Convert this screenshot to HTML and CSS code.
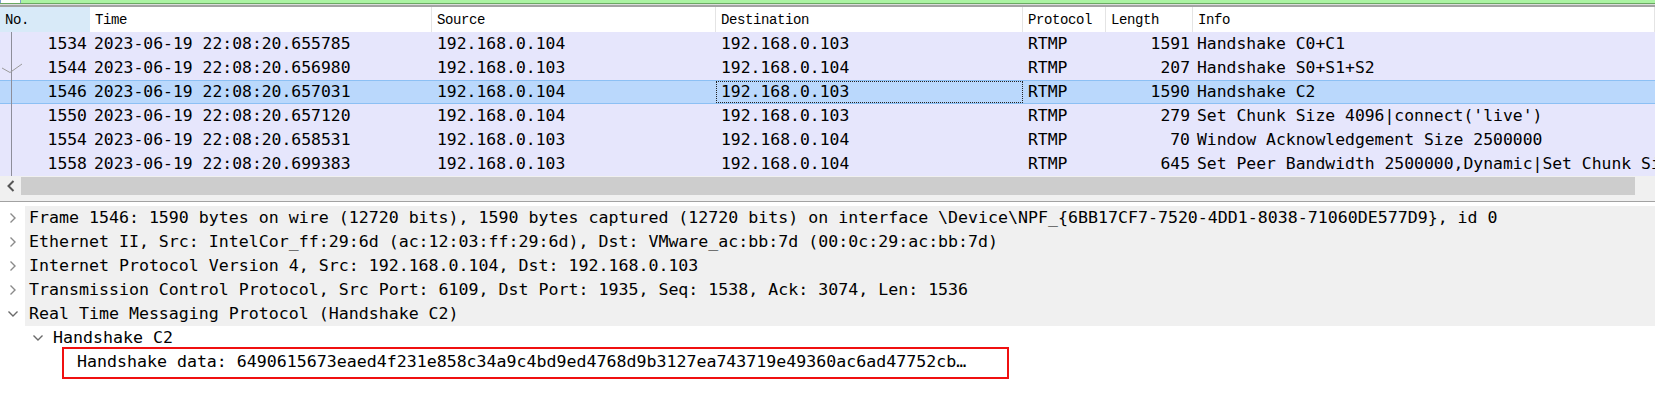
FILE: index.html
```html
<!DOCTYPE html>
<html>
<head>
<meta charset="utf-8">
<link rel="stylesheet" href="styles.css">
</head>
<body>
<div class="filter"><div class="filter-icon"></div></div>
<div class="rule"></div>
<div class="plist">
  <div class="prow phead">
    <div class="hc hc-no">No.</div>
    <div class="hc">Time</div>
    <div class="hc">Source</div>
    <div class="hc">Destination</div>
    <div class="hc">Protocol</div>
    <div class="hc">Length</div>
    <div class="hc">Info</div>
  </div>
  <div class="rows">
    <div class="gutter-line"></div>
    <svg class="tick" width="24" height="14" viewBox="0 0 24 14"><polyline points="2,7 10,11.5 22,3" fill="none" stroke="#9a9a9a" stroke-width="1"/></svg>
    <div class="prow">
      <div class="c num">1534</div><div class="c t">2023-06-19 22:08:20.655785</div><div class="c">192.168.0.104</div><div class="c">192.168.0.103</div><div class="c">RTMP</div><div class="c len">1591</div><div class="c info">Handshake C0+C1</div>
    </div>
    <div class="prow">
      <div class="c num">1544</div><div class="c t">2023-06-19 22:08:20.656980</div><div class="c">192.168.0.103</div><div class="c">192.168.0.104</div><div class="c">RTMP</div><div class="c len">207</div><div class="c info">Handshake S0+S1+S2</div>
    </div>
    <div class="prow sel">
      <div class="c num">1546</div><div class="c t">2023-06-19 22:08:20.657031</div><div class="c">192.168.0.104</div><div class="c focus">192.168.0.103</div><div class="c">RTMP</div><div class="c len">1590</div><div class="c info">Handshake C2</div>
    </div>
    <div class="prow">
      <div class="c num">1550</div><div class="c t">2023-06-19 22:08:20.657120</div><div class="c">192.168.0.104</div><div class="c">192.168.0.103</div><div class="c">RTMP</div><div class="c len">279</div><div class="c info">Set Chunk Size 4096|connect('live')</div>
    </div>
    <div class="prow">
      <div class="c num">1554</div><div class="c t">2023-06-19 22:08:20.658531</div><div class="c">192.168.0.103</div><div class="c">192.168.0.104</div><div class="c">RTMP</div><div class="c len">70</div><div class="c info">Window Acknowledgement Size 2500000</div>
    </div>
    <div class="prow">
      <div class="c num">1558</div><div class="c t">2023-06-19 22:08:20.699383</div><div class="c">192.168.0.103</div><div class="c">192.168.0.104</div><div class="c">RTMP</div><div class="c len">645</div><div class="c info">Set Peer Bandwidth 2500000,Dynamic|Set Chunk Size 4096</div>
    </div>
  </div>
  <div class="hscroll">
    <div class="arrow"><svg width="8" height="12" viewBox="0 0 8 12"><polyline points="6.5,1 1.5,6 6.5,11" fill="none" stroke="#555" stroke-width="2"/></svg></div>
    <div class="thumb"></div>
  </div>
</div>
<div class="splitter"></div>
<div class="details">
  <div class="drow top"><span class="chev"><svg width="8" height="12" viewBox="0 0 8 12"><polyline points="1.5,1.5 6,6 1.5,10.5" fill="none" stroke="#8a8a8a" stroke-width="1.4"/></svg></span><span class="dtext">Frame 1546: 1590 bytes on wire (12720 bits), 1590 bytes captured (12720 bits) on interface \Device\NPF_{6BB17CF7-7520-4DD1-8038-71060DE577D9}, id 0</span></div>
  <div class="drow top"><span class="chev"><svg width="8" height="12" viewBox="0 0 8 12"><polyline points="1.5,1.5 6,6 1.5,10.5" fill="none" stroke="#8a8a8a" stroke-width="1.4"/></svg></span><span class="dtext">Ethernet II, Src: IntelCor_ff:29:6d (ac:12:03:ff:29:6d), Dst: VMware_ac:bb:7d (00:0c:29:ac:bb:7d)</span></div>
  <div class="drow top"><span class="chev"><svg width="8" height="12" viewBox="0 0 8 12"><polyline points="1.5,1.5 6,6 1.5,10.5" fill="none" stroke="#8a8a8a" stroke-width="1.4"/></svg></span><span class="dtext">Internet Protocol Version 4, Src: 192.168.0.104, Dst: 192.168.0.103</span></div>
  <div class="drow top"><span class="chev"><svg width="8" height="12" viewBox="0 0 8 12"><polyline points="1.5,1.5 6,6 1.5,10.5" fill="none" stroke="#8a8a8a" stroke-width="1.4"/></svg></span><span class="dtext">Transmission Control Protocol, Src Port: 6109, Dst Port: 1935, Seq: 1538, Ack: 3074, Len: 1536</span></div>
  <div class="drow top"><span class="chev"><svg width="12" height="8" viewBox="0 0 12 8"><polyline points="1.5,1.5 6,6 10.5,1.5" fill="none" stroke="#6a6a6a" stroke-width="1.4"/></svg></span><span class="dtext">Real Time Messaging Protocol (Handshake C2)</span></div>
  <div class="drow lvl1"><span class="chev"><svg width="12" height="8" viewBox="0 0 12 8"><polyline points="1.5,1.5 6,6 10.5,1.5" fill="none" stroke="#6a6a6a" stroke-width="1.4"/></svg></span><span class="dtext">Handshake C2</span></div>
  <div class="drow lvl2"><span class="chev"></span><span class="dtext">Handshake data: 6490615673eaed4f231e858c34a9c4bd9ed4768d9b3127ea743719e49360ac6ad47752cb…</span><div class="mark"></div></div>
</div>
</body>
</html>
```

FILE: styles.css
```css
html, body {
  margin: 0;
  padding: 0;
  background: #ffffff;
}
body {
  width: 1655px;
  height: 409px;
  overflow: hidden;
  font-family: "DejaVu Sans Mono", "Liberation Mono", monospace;
  color: #000;
}
.filter {
  height: 3px;
  background: #abf3a3;
  border-bottom: 1px solid #6aa862;
  display: flex;
}
.filter-icon {
  width: 19px;
  height: 3px;
  background: #ffffff;
  border-right: 1px solid #7f9fcf;
  border-left: 1px solid #7f9fcf;
}
.rule {
  height: 1px;
  background: #dcdcdc;
  border-bottom: 2px solid #a3a3a3;
}
.plist {
  display: flex;
  flex-direction: column;
}
.prow {
  display: grid;
  grid-template-columns: 90px 342px 284px 307px 83px 87px 1fr;
  height: 24px;
  box-sizing: border-box;
  background: #e6e6fc;
  font-size: 16.4px;
  line-height: 24px;
  white-space: nowrap;
}
.phead {
  height: 25px;
  background: #ffffff;
  font-family: "Liberation Mono", monospace;
  font-size: 14px;
  letter-spacing: -0.4px;
  line-height: 25px;
}
.hc {
  padding: 1px 0 0 5px;
  border-right: 1px solid #e4e4e4;
  overflow: hidden;
}
.hc-no {
  background: #d8eaf8;
  border-right: none;
}
.rows {
  position: relative;
  display: flex;
  flex-direction: column;
}
.gutter-line {
  position: absolute;
  left: 11px;
  top: 0;
  bottom: 0;
  width: 1px;
  background: #8e8e9a;
  z-index: 2;
}
.tick {
  position: absolute;
  left: 0;
  top: 29px;
  z-index: 2;
}
.c {
  padding-left: 5px;
  overflow: hidden;
}
.c.num {
  text-align: right;
  padding: 0 3px 0 0;
}
.c.t {
  padding-left: 4px;
}
.c.len {
  text-align: right;
  padding: 0 3px 0 0;
}
.c.info {
  padding-left: 4px;
}
.prow.sel {
  background: #bad8fc;
  border-top: 1px solid #8cc0f4;
  border-bottom: 1px solid #8cc0f4;
  line-height: 22px;
}
.c.focus {
  border: 1px dotted #222;
  padding-left: 4px;
  line-height: 20px;
}
.hscroll {
  height: 20px;
  background: #f0f0f0;
  display: flex;
  align-items: center;
}
.arrow {
  width: 21px;
  display: flex;
  justify-content: center;
}
.thumb {
  width: 1614px;
  height: 18px;
  background: #cdcdcd;
}
.splitter {
  height: 5px;
  background: #f0f0f0;
  border-bottom: 1px solid #a2a2a2;
  margin-bottom: 4px;
}
.details {
  display: flex;
  flex-direction: column;
}
.drow {
  position: relative;
  display: flex;
  height: 24px;
  font-size: 16.6px;
  line-height: 24px;
  white-space: nowrap;
}
.chev {
  width: 25px;
  flex: none;
  display: flex;
  align-items: center;
  justify-content: center;
}
.dtext {
  padding-left: 4px;
  flex: 1;
  overflow: hidden;
}
.drow.top .dtext {
  background: #f0f0f0;
}
.drow.lvl1 {
  padding-left: 24px;
}
.drow.lvl1 .chev {
  justify-content: flex-start;
  padding-left: 8px;
  box-sizing: border-box;
}
.drow.lvl2 {
  padding-left: 48px;
}
.mark {
  position: absolute;
  left: 62px;
  top: -3px;
  width: 947px;
  height: 32px;
  box-sizing: border-box;
  border: 2px solid #f01010;
}
```
